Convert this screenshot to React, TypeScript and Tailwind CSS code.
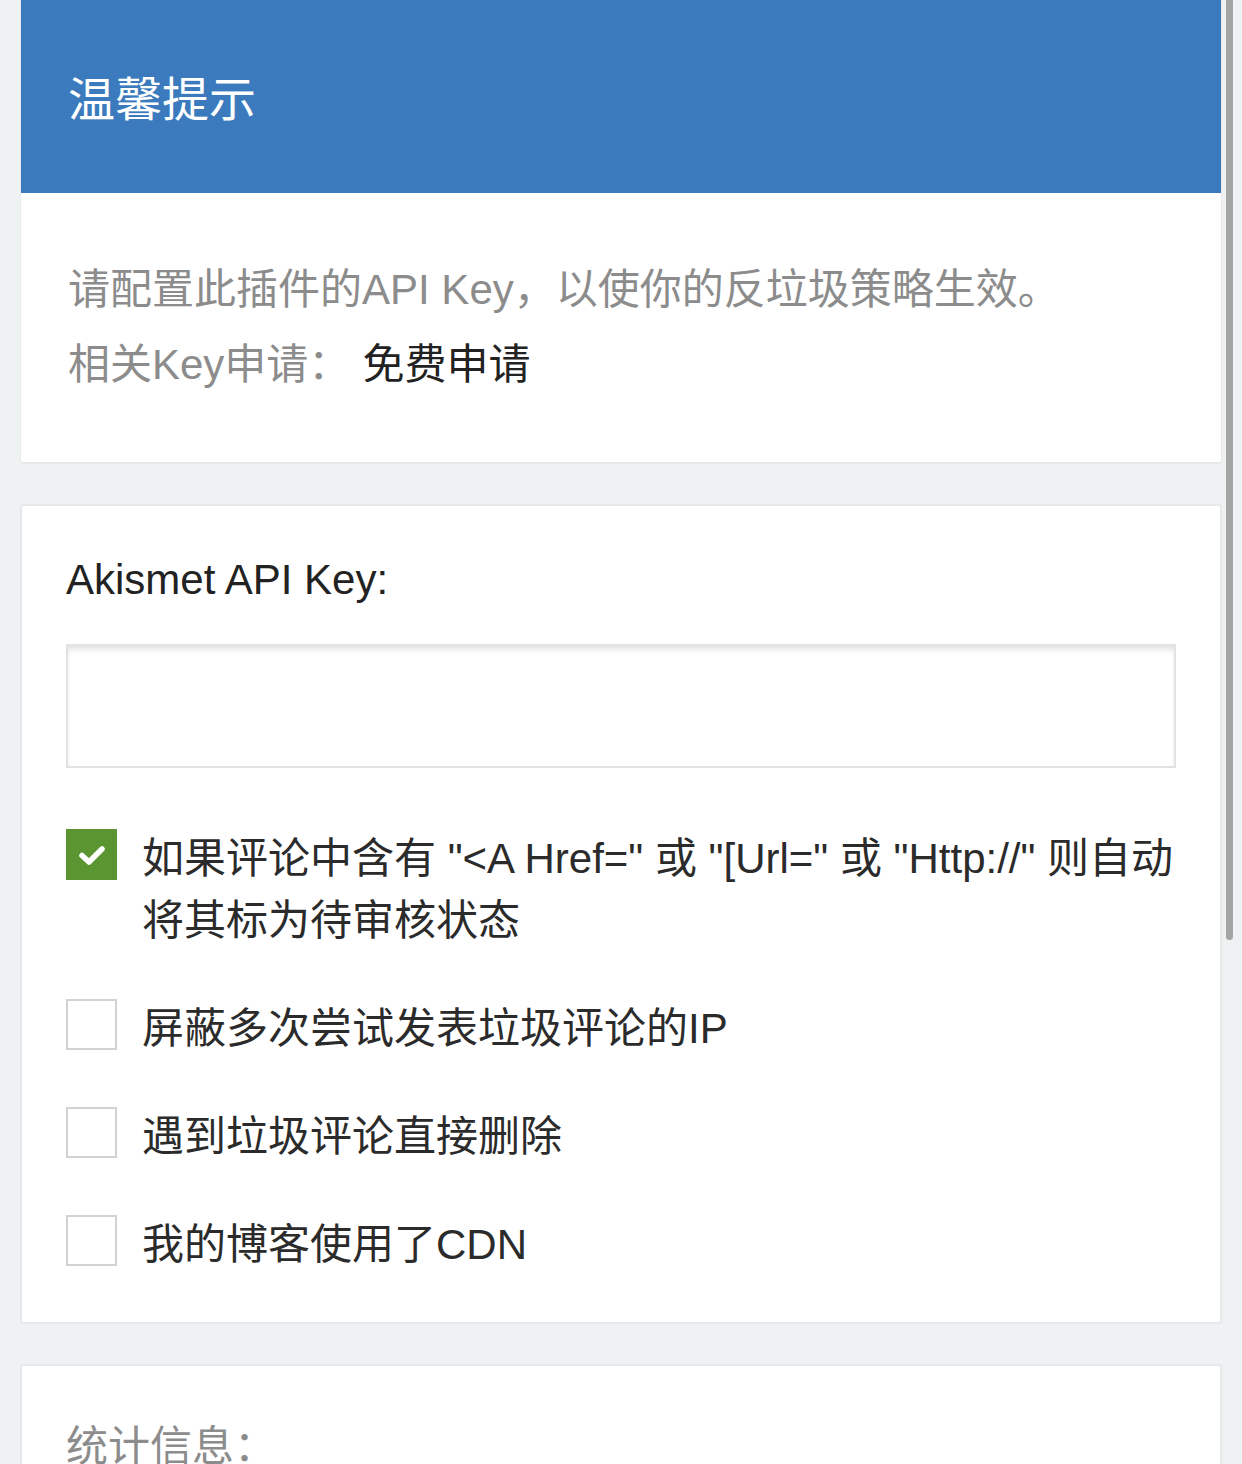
import { useState } from 'react';

const font = { fontFamily: '"Liberation Sans", "Noto Sans CJK SC", sans-serif' };

function CheckRow({ label, checked, onToggle }: { label: string; checked: boolean; onToggle: () => void }) {
    return (
        <label className="flex items-start gap-[25px] cursor-pointer" onClick={onToggle}>
            <span
                className={
                    checked
                        ? 'mt-[1px] flex h-[51px] w-[51px] shrink-0 items-center justify-center bg-[#5b9531]'
                        : 'mt-[1px] flex h-[51px] w-[51px] shrink-0 items-center justify-center border-2 border-[#d2d2d2] bg-white'
                }
            >
                {checked && (
                    <svg width="28" height="22" viewBox="0 0 28 22" fill="none">
                        <path d="M4 11.5 L11 18 L24 5" stroke="white" strokeWidth="5.5" strokeLinecap="round" strokeLinejoin="round" />
                    </svg>
                )}
            </span>
            <span className="text-[42px] leading-[62px] text-[#2b2b2b]">{label}</span>
        </label>
    );
}

export default function App() {
    const [checks, setChecks] = useState([true, false, false, false]);
    const [apiKey, setApiKey] = useState('');

    const toggle = (i: number) => setChecks((c) => c.map((v, j) => (j === i ? !v : v)));

    const labels = [
        '如果评论中含有 "<A Href=" 或 "[Url=" 或 "Http://" 则自动将其标为待审核状态',
        '屏蔽多次尝试发表垃圾评论的IP',
        '遇到垃圾评论直接删除',
        '我的博客使用了CDN',
    ];

    return (
        <div className="relative min-h-screen bg-[#eff2f3] px-[20px] pb-10" style={font}>
            {/* 温馨提示 */}
            <div className="overflow-hidden rounded-b-[4px] border-x border-b-2 border-[#e6e8e9] bg-white">
                <div className="flex h-[193px] items-center bg-[#3b7bbd] px-[47px] pt-[8px]">
                    <h1 className="text-[47px] font-normal text-white">温馨提示</h1>
                </div>
                <div className="flex flex-col gap-[13px] px-[47px] py-[66px] text-[42px] leading-[62px] text-[#8c8c8c]">
                    <p>请配置此插件的API Key，以使你的反垃圾策略生效。</p>
                    <p>
                        相关Key申请：<span className="ml-[12px] text-[#222]">免费申请</span>
                    </p>
                </div>
            </div>

            {/* 设置 */}
            <div className="mt-[40px] rounded-[4px] border-2 border-[#e6e8e9] bg-white px-[44px] pt-[43px] pb-[46px]">
                <div className="text-[42px] leading-[62px] text-[#222]">Akismet API Key:</div>
                <input
                    type="text"
                    value={apiKey}
                    onChange={(e) => setApiKey(e.target.value)}
                    className="mt-[33px] block h-[124px] w-full border-2 border-[#e2e2e2] bg-white px-4 text-[36px] shadow-[inset_0_5px_6px_-2px_rgba(0,0,0,0.13)] outline-none"
                />
                <div className="mt-[60px] flex flex-col gap-[46px]">
                    {labels.map((l, i) => (
                        <CheckRow key={i} label={l} checked={checks[i]} onToggle={() => toggle(i)} />
                    ))}
                </div>
            </div>

            {/* 统计信息 */}
            <div className="mt-[40px] rounded-[4px] border-2 border-[#e6e8e9] bg-white px-[44px] pt-[50px] pb-[40px]">
                <div className="text-[42px] leading-[62px] text-[#8c8c8c]">统计信息：</div>
            </div>

            {/* overlay scrollbar */}
            <div className="absolute right-[9px] top-0 h-[940px] w-[7px] rounded-b-full bg-[#a3a5a5]" />
        </div>
    );
}
